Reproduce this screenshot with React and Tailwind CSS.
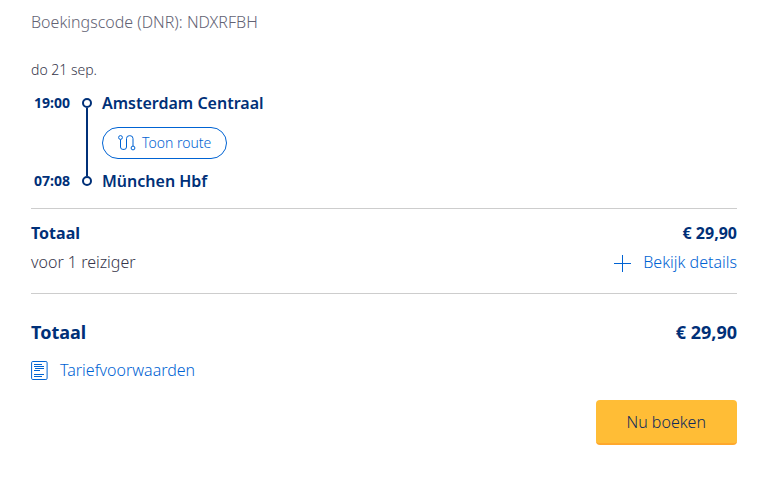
import { useState } from "react";

const trip = {
  code: "NDXRFBH",
  date: "do 21 sep.",
  departure: { time: "19:00", station: "Amsterdam Centraal" },
  arrival: { time: "07:08", station: "München Hbf" },
  price: "€ 29,90",
};

// ICONS
const RouteIcon = () => (
  <svg width="18" height="16" viewBox="0 0 18 16" fill="none" stroke="currentColor" aria-hidden="true">
    <circle cx="2.5" cy="2.5" r="1.9" />
    <path d="M2.5 4.5V12a2.4 2.4 0 0 0 2.4 2.4h1.2A2.4 2.4 0 0 0 8.5 12V3.6A2.9 2.9 0 0 1 11.4 .7h.7A2.9 2.9 0 0 1 15 3.6v7.4" />
    <circle cx="15" cy="13" r="1.9" />
  </svg>
);

const PlusIcon = () => (
  <svg width="17" height="20" viewBox="0 0 17 20" stroke="currentColor" aria-hidden="true">
    <path d="M8.5 3v17M0 11.5h17" />
  </svg>
);

const ConditionsIcon = () => (
  <svg width="17" height="20" viewBox="0 0 17 20" fill="none" stroke="currentColor" aria-hidden="true">
    <rect x="0.6" y="1.5" width="15.5" height="18" rx="1.2" />
    <path d="M3 4.5h8M3 6.5h10M4 8.5h9M3 10.5h6M3 14.5h10M3 16.5h8" />
  </svg>
);

// ONE STOP OF THE JOURNEY
function Stop({ time, station }) {
  return (
    <li className="flex h-5 items-center text-[#003078]">
      <time className="w-[38px] text-right text-sm font-bold">{time}</time>
      <span className="ml-3 size-[10px] rounded-full border-2 border-[#003078] bg-white" />
      <span className="ml-[10px] text-base font-semibold">{station}</span>
    </li>
  );
}

function App() {
  const [showRoute, setShowRoute] = useState(false);
  const [showDetails, setShowDetails] = useState(false);

  return (
    <main className="bg-white pt-3 pr-[29px] pb-8 pl-[31px] font-['Noto_Sans','Open_Sans',sans-serif] text-base leading-5 font-light text-[#35354a]">
      <p className="text-[#626273]">Boekingscode (DNR): {trip.code}</p>

      <section className="mt-7 border-b border-[#cdcdcd] pb-[17px]">
        <p className="text-sm leading-5">{trip.date}</p>
        <ol className="mt-[13px] pl-px">
          <Stop {...trip.departure} />
          <li className="-my-[5px] ml-[54px] flex h-[68px] items-center border-l-2 border-[#003078] pt-[2px] pl-[14px]">
            <button
              type="button"
              aria-expanded={showRoute}
              onClick={() => setShowRoute(!showRoute)}
              className="flex h-8 items-center gap-[6px] rounded-full border border-[#0063d3] px-[15px] text-sm text-[#0063d3]"
            >
              <RouteIcon />
              Toon route
            </button>
          </li>
          <Stop {...trip.arrival} />
        </ol>
      </section>

      <section className="border-b border-[#cdcdcd] pt-[14px] pb-[21px]">
        <div className="flex justify-between font-bold text-[#003078]">
          <h2>Totaal</h2>
          <span>{trip.price}</span>
        </div>
        <div className="mt-[9px] flex justify-between">
          <p>voor 1 reiziger</p>
          <button
            type="button"
            aria-expanded={showDetails}
            onClick={() => setShowDetails(!showDetails)}
            className="flex items-center gap-3 text-[#0063d3]"
          >
            <PlusIcon />
            Bekijk details
          </button>
        </div>
      </section>

      <section className="pt-[26px]">
        <div className="flex justify-between text-lg leading-6 font-bold text-[#003078]">
          <h2>Totaal</h2>
          <span>{trip.price}</span>
        </div>
        <a href="#tariefvoorwaarden" className="mt-4 inline-flex items-center gap-3 text-[#0063d3]">
          <ConditionsIcon />
          Tariefvoorwaarden
        </a>
        <div className="mt-4 flex justify-end">
          <button
            type="button"
            className="h-[45px] rounded-sm border-b-2 border-[#ffa82c] bg-[#ffbd36] px-[31px] text-[#0c2a5c]"
          >
            Nu boeken
          </button>
        </div>
      </section>
    </main>
  );
}

export default App;
